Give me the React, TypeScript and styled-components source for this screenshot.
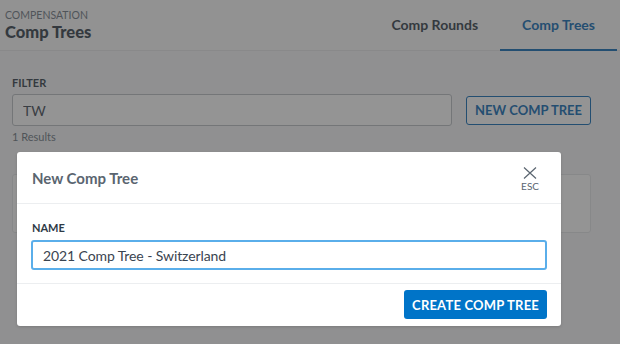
import React, { useState } from "react";
import styled, { createGlobalStyle } from "styled-components";

const GlobalStyle = createGlobalStyle`
  html, body {
    margin: 0;
    padding: 0;
  }
  body {
    font-family: Lato, "Liberation Sans", sans-serif;
    color: #2e3a46;
  }
  * {
    box-sizing: border-box;
  }
`;

const Page = styled.div`
  position: relative;
  width: 620px;
  height: 344px;
  overflow: hidden;
  background: #f6f7f8;
`;

const Header = styled.header`
  display: flex;
  align-items: stretch;
  justify-content: space-between;
  height: 51px;
  padding: 0 3px 0 5px;
  background: #fafafa;
  border-bottom: 1px solid #e6e8ea;
`;

const TitleBlock = styled.div`
  display: flex;
  flex-direction: column;
  justify-content: center;
  padding-top: 1px;
`;

const Eyebrow = styled.div`
  font-size: 10.5px;
  line-height: 13px;
  color: #6a7580;
  text-transform: uppercase;
`;

const Title = styled.h1`
  margin: 0;
  font-size: 16.5px;
  line-height: 20px;
  font-weight: 900;
  color: #2e3a46;
`;

const Tabs = styled.nav`
  display: flex;
  align-items: stretch;
`;

const Tab = styled.button<{ $active?: boolean }>`
  display: flex;
  align-items: center;
  padding: 0 22px;
  border: none;
  background: none;
  font-family: inherit;
  font-size: 14px;
  font-weight: 700;
  color: ${(p) => (p.$active ? "#0a68b4" : "#2e3a46")};
  border-bottom: 2px solid ${(p) => (p.$active ? "#0a68b4" : "transparent")};
  margin-bottom: -1px;
  cursor: pointer;
`;

const Content = styled.main`
  padding: 25px 29px 0 12px;
`;

const Label = styled.label`
  display: block;
  font-size: 11px;
  line-height: 14px;
  font-weight: 700;
  color: #2e3a46;
  text-transform: uppercase;
`;

const FilterRow = styled.div`
  display: flex;
  align-items: center;
  gap: 14px;
  margin-top: 4px;
`;

const TextInput = styled.input<{ $focused?: boolean }>`
  flex: 1;
  height: ${(p) => (p.$focused ? "30px" : "32px")};
  padding: 0 10px;
  border: ${(p) => (p.$focused ? "2px solid #5aaeea" : "1px solid #b9bdc2")};
  border-radius: 3px;
  background: #fff;
  font-family: inherit;
  font-size: 14px;
  letter-spacing: -0.1px;
  color: #3a4450;
  outline: none;
`;

const OutlineButton = styled.button`
  height: 29px;
  padding: 0 8px;
  border: 1px solid #0a68b4;
  border-radius: 3px;
  background: #fff;
  font-family: inherit;
  font-size: 13px;
  font-weight: 700;
  color: #0a68b4;
  cursor: pointer;
`;

const ResultCount = styled.div`
  margin-top: 4px;
  font-size: 11px;
  line-height: 14px;
  color: #6a747e;
`;

const ResultCard = styled.div`
  margin-top: 30px;
  height: 59px;
  background: #fff;
  border: 1px solid #e2e4e7;
  border-radius: 3px;
`;

const Overlay = styled.div`
  position: absolute;
  inset: 0;
  background: rgba(58, 58, 58, 0.54);
`;

const Modal = styled.div`
  position: absolute;
  left: 17px;
  top: 152px;
  width: 544px;
  background: #fff;
  border-radius: 3px;
  box-shadow: 0 1px 3px rgba(0, 0, 0, 0.15);
`;

const ModalHeader = styled.div`
  display: flex;
  align-items: center;
  justify-content: space-between;
  height: 52px;
  padding: 0 22px 0 15px;
  border-bottom: 1px solid #eceef0;
`;

const ModalTitle = styled.h2`
  margin: 0;
  font-size: 15px;
  font-weight: 700;
  color: #5a6570;
`;

const CloseButton = styled.button`
  display: flex;
  flex-direction: column;
  align-items: center;
  gap: 2px;
  padding: 0;
  margin-top: 3px;
  border: none;
  background: none;
  font-family: inherit;
  font-size: 10px;
  line-height: 11px;
  color: #5a6570;
  cursor: pointer;
`;

const ModalBody = styled.div`
  padding: 17px 14px 13px 14px;
  border-bottom: 1px solid #eceef0;

  ${Label} {
    margin-left: 1px;
    margin-bottom: 5px;
  }
`;

const ModalFooter = styled.div`
  display: flex;
  justify-content: flex-end;
  padding: 6px 14px 7px 14px;
`;

const PrimaryButton = styled.button`
  height: 29px;
  padding: 0 8px;
  border: none;
  border-radius: 3px;
  background: #0074c8;
  font-family: inherit;
  font-size: 13px;
  font-weight: 700;
  color: #fff;
  letter-spacing: 0.2px;
  cursor: pointer;
`;

const NameField = styled.div`
  display: flex;
`;

export default function App() {
  const [filter, setFilter] = useState("TW");
  const [name, setName] = useState("2021 Comp Tree - Switzerland");

  return (
    <>
      <GlobalStyle />
      <Page>
        <Header>
          <TitleBlock>
            <Eyebrow>Compensation</Eyebrow>
            <Title>Comp Trees</Title>
          </TitleBlock>
          <Tabs>
            <Tab>Comp Rounds</Tab>
            <Tab $active>Comp Trees</Tab>
          </Tabs>
        </Header>
        <Content>
          <Label>Filter</Label>
          <FilterRow>
            <TextInput value={filter} onChange={(e) => setFilter(e.target.value)} />
            <OutlineButton>NEW COMP TREE</OutlineButton>
          </FilterRow>
          <ResultCount>1 Results</ResultCount>
          <ResultCard />
        </Content>
        <Overlay />
        <Modal>
          <ModalHeader>
            <ModalTitle>New Comp Tree</ModalTitle>
            <CloseButton>
              <svg width="14" height="12" viewBox="0 0 14 12" fill="none">
                <path d="M1 0.5 L13 11.5 M13 0.5 L1 11.5" stroke="#5a6570" strokeWidth="1.2" />
              </svg>
              ESC
            </CloseButton>
          </ModalHeader>
          <ModalBody>
            <Label>Name</Label>
            <NameField>
              <TextInput $focused value={name} onChange={(e) => setName(e.target.value)} />
            </NameField>
          </ModalBody>
          <ModalFooter>
            <PrimaryButton>CREATE COMP TREE</PrimaryButton>
          </ModalFooter>
        </Modal>
      </Page>
    </>
  );
}
